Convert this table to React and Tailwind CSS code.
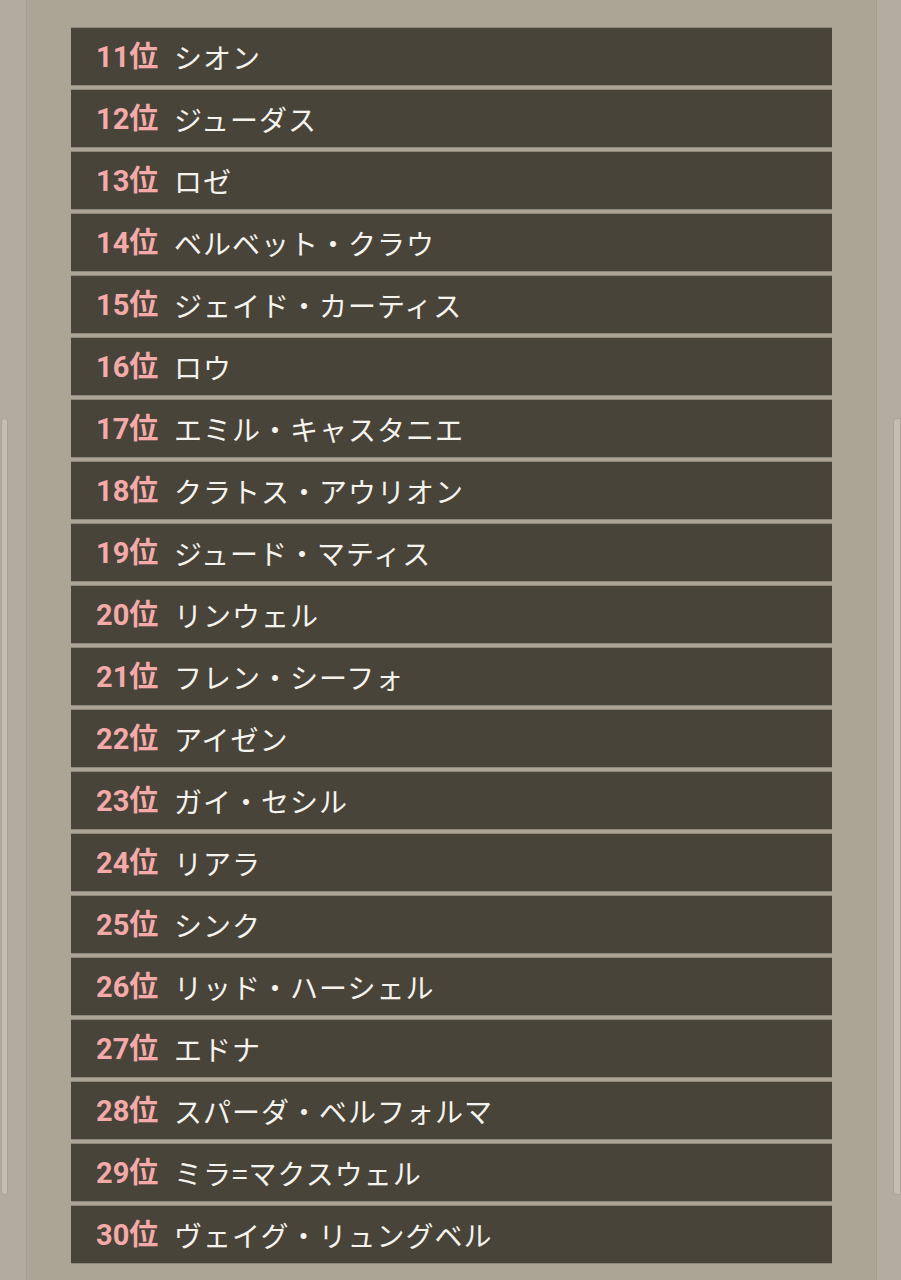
const rows = [
  ["11", "シオン"],
  ["12", "ジューダス"],
  ["13", "ロゼ"],
  ["14", "ベルベット・クラウ"],
  ["15", "ジェイド・カーティス"],
  ["16", "ロウ"],
  ["17", "エミル・キャスタニエ"],
  ["18", "クラトス・アウリオン"],
  ["19", "ジュード・マティス"],
  ["20", "リンウェル"],
  ["21", "フレン・シーフォ"],
  ["22", "アイゼン"],
  ["23", "ガイ・セシル"],
  ["24", "リアラ"],
  ["25", "シンク"],
  ["26", "リッド・ハーシェル"],
  ["27", "エドナ"],
  ["28", "スパーダ・ベルフォルマ"],
  ["29", "ミラ=マクスウェル"],
  ["30", "ヴェイグ・リュングベル"],
];

export default function App() {
  return (
    <div
      className="w-[901px] h-[1280px] flex overflow-hidden bg-[#afa899]"
      style={{ fontFamily: '"Noto Sans CJK JP", "Noto Sans", sans-serif' }}
    >
      <div className="relative w-[27px] h-full bg-[#b2ab9e] border-r border-[#a59e90]">
        <div className="absolute left-[1px] top-[418px] w-[7px] h-[777px] rounded-[4px] bg-[#c4beb2] border border-[#a9a293]" />
      </div>
      <div className="flex-1 h-full bg-[#aca595] pl-[44px] pr-[44px] pt-[28px]">
        <div className="flex flex-col gap-[5px]">
          {rows.map(([n, name]) => (
            <div
              key={n}
              className="h-[57px] bg-[#48443a] flex items-center pl-[25px] shadow-[0_1px_0_#8f887a,0_-1px_0_#8f887a]"
            >
              <span
                className="w-[78px] text-[29px] leading-none font-bold text-[#f4aaa9] pt-[2px]"
                style={{ fontFamily: 'Roboto, "Noto Sans CJK JP", sans-serif' }}
              >
                {n}位
              </span>
              <span className="text-[28px] leading-none text-[#f5f3ee] tracking-[1px]">{name}</span>
            </div>
          ))}
        </div>
      </div>
      <div className="relative w-[25px] h-full bg-[#b3ac9f] border-l border-[#a59e90]">
        <div className="absolute right-[0px] top-[418px] w-[8px] h-[777px] rounded-l-[4px] bg-[#c4beb2] border border-[#a9a293]" />
      </div>
    </div>
  );
}
